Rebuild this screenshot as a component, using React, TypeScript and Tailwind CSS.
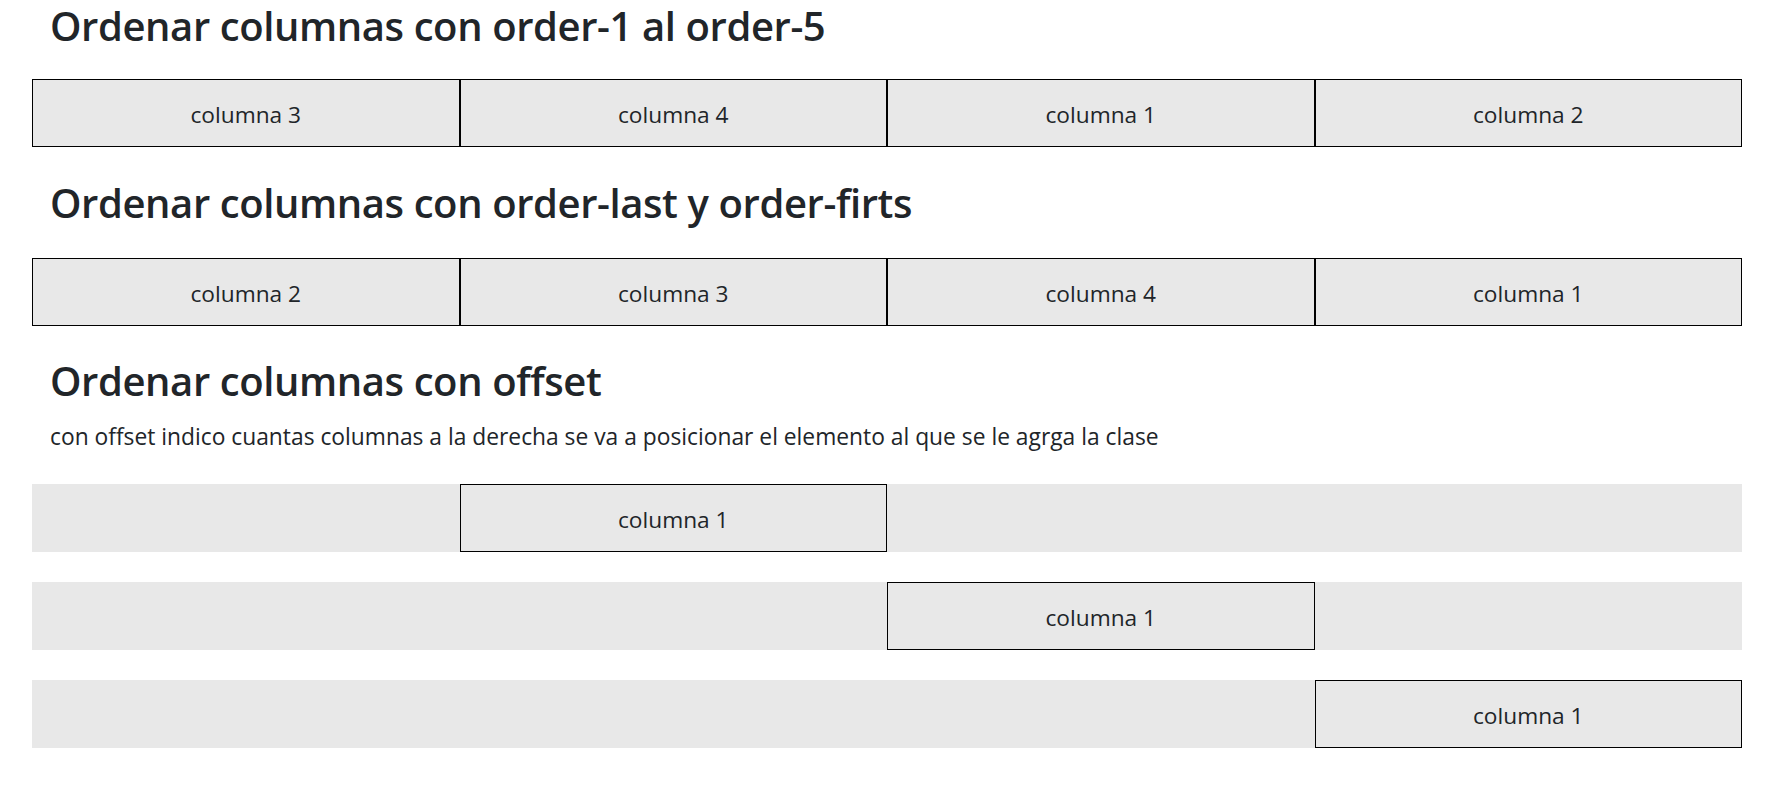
const cols1 = ['columna 3', 'columna 4', 'columna 1', 'columna 2'];
const cols2 = ['columna 2', 'columna 3', 'columna 4', 'columna 1'];

function Cell({ label, className = '' }: { label: string; className?: string }) {
  return (
    <div className={`h-[68px] flex items-center justify-center border border-black bg-[#e8e8e8] pt-[3px] text-[22.7px] leading-[33px] ${className}`}>
      {label}
    </div>
  );
}

export default function App() {
  return (
    <div className="bg-white min-h-screen pl-8 text-[#212529] font-['Open_Sans',sans-serif]">
      <h1 className="pt-[2px] mb-[29px] pl-[18px] text-[40px] leading-[48px] font-semibold tracking-[-0.01em]">
        Ordenar columnas con order-1 al order-5
      </h1>
      <div className="w-[1710px] grid grid-cols-4">
        {cols1.map((c) => (
          <Cell key={c} label={c} />
        ))}
      </div>

      <h2 className="mt-[32px] mb-[31px] pl-[18px] text-[40px] leading-[48px] font-semibold tracking-[-0.01em]">
        Ordenar columnas con order-last y order-firts
      </h2>
      <div className="w-[1710px] grid grid-cols-4">
        {cols2.map((c) => (
          <Cell key={c} label={c} />
        ))}
      </div>

      <h2 className="mt-[31px] pl-[18px] text-[40px] leading-[48px] font-semibold tracking-[-0.01em]">
        Ordenar columnas con offset
      </h2>
      <p className="mt-[17px] mb-[32px] pl-[18px] text-[22.8px] leading-[30px]">
        con offset indico cuantas columnas a la derecha se va a posicionar el elemento al que se le agrga la clase
      </p>

      <div className="flex flex-col gap-[30px]">
        <div className="w-[1710px] grid grid-cols-4 bg-[#e8e8e8]">
          <Cell label="columna 1" className="col-start-2" />
        </div>
        <div className="w-[1710px] grid grid-cols-4 bg-[#e8e8e8]">
          <Cell label="columna 1" className="col-start-3" />
        </div>
        <div className="w-[1710px] grid grid-cols-4 bg-[#e8e8e8]">
          <Cell label="columna 1" className="col-start-4" />
        </div>
      </div>
    </div>
  );
}
